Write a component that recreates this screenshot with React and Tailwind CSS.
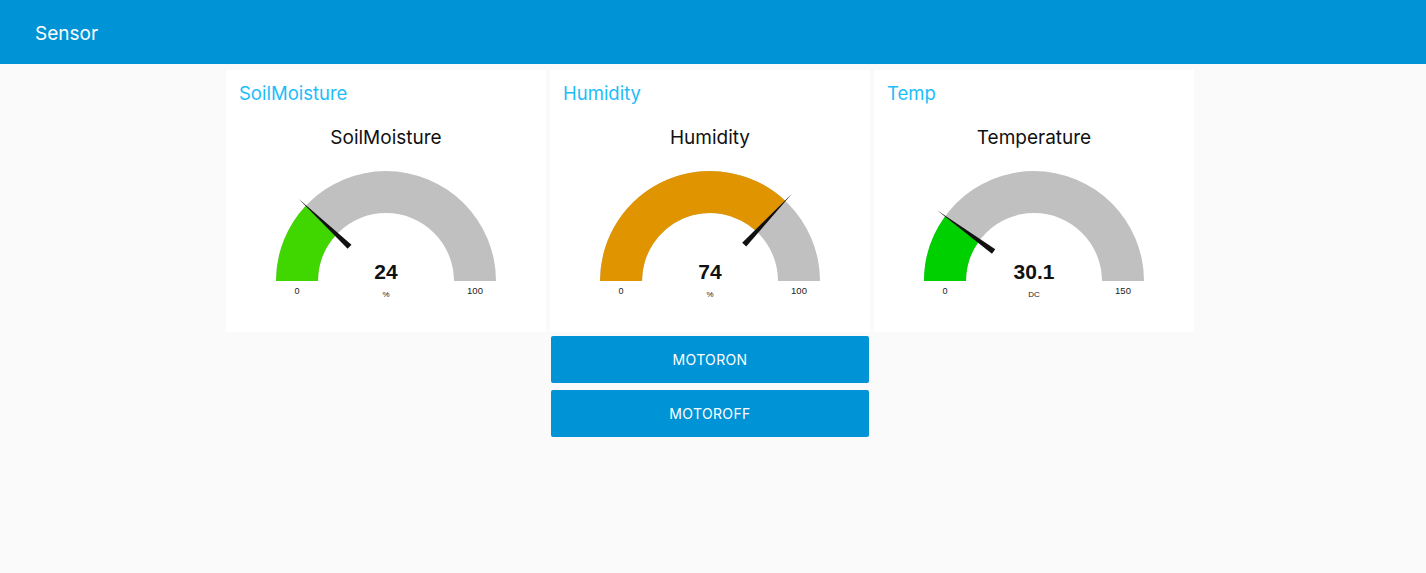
const GAUGES = [
  { group: 'SoilMoisture', title: 'SoilMoisture', value: '24', num: 24, max: 100, units: '%', color: '#40d700' },
  { group: 'Humidity', title: 'Humidity', value: '74', num: 74, max: 100, units: '%', color: '#e09400' },
  { group: 'Temp', title: 'Temperature', value: '30.1', num: 30.1, max: 150, units: 'DC', color: '#00d000' },
]

const CX = 160
const CY = 165
const RO = 110
const RI = 68

function pt(r, a) {
  return [CX + r * Math.cos(a), CY - r * Math.sin(a)]
}

function arc(p) {
  const a = Math.PI - p * Math.PI
  const [ox, oy] = pt(RO, a)
  const [ix, iy] = pt(RI, a)
  return `M ${CX - RO} ${CY} A ${RO} ${RO} 0 0 1 ${ox} ${oy} L ${ix} ${iy} A ${RI} ${RI} 0 0 0 ${CX - RI} ${CY} Z`
}

function needle(p) {
  const a = Math.PI - p * Math.PI
  const [bx, by] = pt(50, a)
  const [tx, ty] = pt(120, a)
  const nx = Math.sin(a) * 2.8
  const ny = Math.cos(a) * 2.8
  return `${bx + nx},${by + ny} ${bx - nx},${by - ny} ${tx},${ty}`
}

function Gauge({ g }) {
  const p = g.num / g.max
  return (
    <svg width="320" height="216" viewBox="0 0 320 216" style={{ fontFamily: '"Liberation Sans", Arial, sans-serif' }}>
      <text x="160" y="28" textAnchor="middle" fontSize="19" fill="#111" style={{ fontFamily: 'Inter, "Liberation Sans", sans-serif' }}>{g.title}</text>
      <path d={arc(1)} fill="#c0c0c0" />
      <path d={arc(p)} fill={g.color} />
      <polygon points={needle(p)} fill="#111" />
      <text x="160" y="163" textAnchor="middle" fontSize="21" fontWeight="bold" fill="#111">{g.value}</text>
      <text x="160" y="181" textAnchor="middle" fontSize="8" fill="#222">{g.units}</text>
      <text x="71" y="178" textAnchor="middle" fontSize="9" fill="#222">0</text>
      <text x="249" y="178" textAnchor="middle" fontSize="9.5" fill="#222">{g.max}</text>
    </svg>
  )
}

function Card({ g }) {
  return (
    <div className="w-[320px] h-[262px] bg-white flex flex-col">
      <div className="h-[46px] flex items-center px-[13px] pt-[2px] text-[18.5px] text-[#1cbdf9]">{g.group}</div>
      <Gauge g={g} />
    </div>
  )
}

export default function App() {
  return (
    <div className="min-h-[573px] bg-[#fafafa]" style={{ fontFamily: 'Inter, "Liberation Sans", sans-serif' }}>
      <header className="h-16 bg-[#0093d6] flex items-center px-[35px] pt-1 text-white text-[19px]">Sensor</header>
      <main className="flex gap-1 ml-[226px] mt-[6px]">
        <Card g={GAUGES[0]} />
        <div className="flex flex-col">
          <Card g={GAUGES[1]} />
          <div className="flex flex-col gap-[7px] mt-1 px-px">
            <button className="h-[47px] w-[318px] bg-[#0093d6] rounded-[2px] text-white text-sm tracking-wide">MOTORON</button>
            <button className="h-[47px] w-[318px] bg-[#0093d6] rounded-[2px] text-white text-sm tracking-wide">MOTOROFF</button>
          </div>
        </div>
        <Card g={GAUGES[2]} />
      </main>
    </div>
  )
}
